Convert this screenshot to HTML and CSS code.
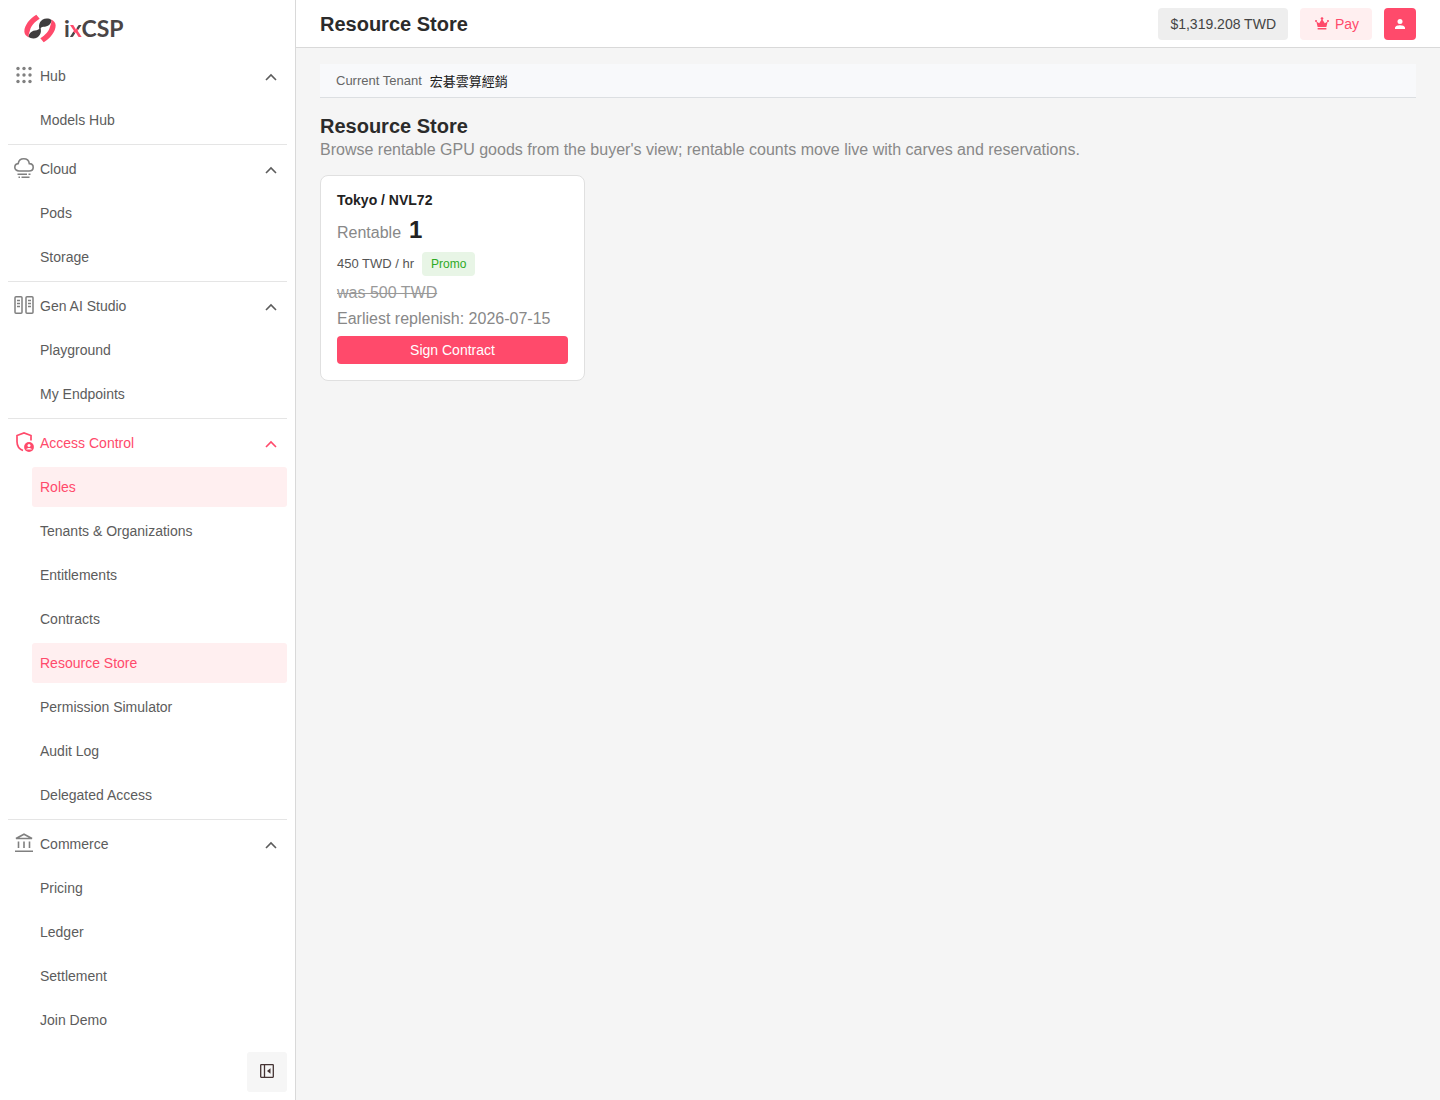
FILE: index.html
```html
<!DOCTYPE html>
<html lang="en">

<head>
    <meta charset="UTF-8"/>
    <meta name="viewport" content="width=device-width, initial-scale=1.0"/>
    <title>Resource Store</title>
    <link rel="stylesheet" href="styles.css">
</head>

<body>
<!-- shared chevron -->
<svg class="sprite" aria-hidden="true">
    <symbol id="chevron" viewBox="0 0 16 16">
        <path d="M3 11L8 6l5 5" fill="none" stroke="currentColor" stroke-width="1.6"/>
    </symbol>
</svg>
<div class="layout">
    <aside class="sidebar">
        <a class="logo" href="#">
            <svg class="logo-mark" viewBox="48 28 96 86" aria-hidden="true">
                <g id="blade">
                    <path fill="#ff4a6b" d="M85 30L95 42C80 51 69 63 66 76C64 84 60 90 63 98C54 94 49 88 49 80C49 62 66 40 85 30Z"/>
                    <path fill="#3f3d3e" d="M62 96C62 84 72 77 86 76C91 75 94 73 97 68C103 84 94 100 76 101C70 101 65 100 62 96Z"/>
                </g>
                <use href="#blade" transform="rotate(180 96 71)"/>
            </svg>
            <span class="logo-text">i<span class="logo-x">x</span>CSP</span>
        </a>
        <nav class="menu">
            <div class="group">
                <button class="group-title" type="button">
                    <svg class="group-icon" viewBox="0 0 20 20" fill="currentColor" aria-hidden="true">
                        <circle cx="4" cy="3.500" r="1.7"/><circle cx="10" cy="3.500" r="1.7"/><circle cx="16" cy="3.500" r="1.7"/>
                        <circle cx="4" cy="10" r="1.7"/><circle cx="10" cy="10" r="1.7"/><circle cx="16" cy="10" r="1.7"/>
                        <circle cx="4" cy="16.500" r="1.7"/><circle cx="10" cy="16.500" r="1.7"/><circle cx="16" cy="16.500" r="1.7"/>
                    </svg>
                    <span>Hub</span>
                    <svg class="chevron"><use href="#chevron"/></svg>
                </button>
                <a class="item" href="#">Models Hub</a>
            </div>
            <div class="group">
                <button class="group-title" type="button">
                    <svg class="group-icon" viewBox="0 0 20 20" fill="none" stroke="currentColor" stroke-width="1.6" aria-hidden="true">
                        <path d="M5 13C2.500 13 .8 11.500 .8 9.300C.8 7.200 2.300 5.800 4.200 5.600C4.700 2.700 6.900 .8 9.700 .8C12.700 .8 14.900 2.800 15.300 5.600C17.600 5.600 19.200 7.200 19.200 9.300C19.200 11.500 17.500 13 15 13Z"/>
                        <path d="M3.500 16.200H13M14.500 16.200H16.500M4.500 19.200H6M7.500 19.200H15.500"/>
                    </svg>
                    <span>Cloud</span>
                    <svg class="chevron"><use href="#chevron"/></svg>
                </button>
                <a class="item" href="#">Pods</a>
                <a class="item" href="#">Storage</a>
            </div>
            <div class="group">
                <button class="group-title" type="button">
                    <svg class="group-icon" viewBox="0 0 20 20" fill="none" stroke="currentColor" stroke-width="1.5" aria-hidden="true">
                        <rect x="1" y="1.700" width="7" height="16.600" rx="1"/>
                        <rect x="12" y="1.700" width="7" height="16.600" rx="1"/>
                        <path d="M3 5.500h3M3 8.500h3M3 11.500h3M14 5.500h3M14 8.500h3M14 11.500h3"/>
                    </svg>
                    <span>Gen AI Studio</span>
                    <svg class="chevron"><use href="#chevron"/></svg>
                </button>
                <a class="item" href="#">Playground</a>
                <a class="item" href="#">My Endpoints</a>
            </div>
            <div class="group">
                <button class="group-title active" type="button">
                    <svg class="group-icon" viewBox="0 0 20 20" fill="none" stroke="currentColor" stroke-width="1.7" aria-hidden="true">
                        <path d="M9 18.500C5 17 3 13.500 3 9.500V3.500L10 1L17 3.500V8.500"/>
                        <circle cx="15" cy="15" r="4.900" fill="currentColor" stroke="none"/>
                        <circle cx="15" cy="13.400" r="1.500" fill="#fff" stroke="none"/>
                        <path d="M12.200 17.400C12.800 15.400 17.200 15.400 17.800 17.400Z" fill="#fff" stroke="none"/>
                    </svg>
                    <span>Access Control</span>
                    <svg class="chevron"><use href="#chevron"/></svg>
                </button>
                <a class="item active" href="#">Roles</a>
                <a class="item" href="#">Tenants &amp; Organizations</a>
                <a class="item" href="#">Entitlements</a>
                <a class="item" href="#">Contracts</a>
                <a class="item active" href="#">Resource Store</a>
                <a class="item" href="#">Permission Simulator</a>
                <a class="item" href="#">Audit Log</a>
                <a class="item" href="#">Delegated Access</a>
            </div>
            <div class="group">
                <button class="group-title" type="button">
                    <svg class="group-icon" viewBox="0 0 20 20" fill="none" stroke="currentColor" stroke-width="1.600" aria-hidden="true">
                        <path d="M2 5.500L10 1.200L18 5.500ZM4.500 8.500V15M10 8.500V15M15.500 8.500V15M1 18.200H19"/>
                    </svg>
                    <span>Commerce</span>
                    <svg class="chevron"><use href="#chevron"/></svg>
                </button>
                <a class="item" href="#">Pricing</a>
                <a class="item" href="#">Ledger</a>
                <a class="item" href="#">Settlement</a>
                <a class="item" href="#">Join Demo</a>
            </div>
        </nav>
        <button class="collapse" type="button" aria-label="Collapse menu">
            <svg width="16" height="16" viewBox="0 0 16 16" fill="none" stroke="currentColor" stroke-width="1.300" aria-hidden="true">
                <rect x="1.700" y="1.700" width="12.600" height="12.600" rx=".5"/>
                <path d="M5.500 1.700V14.300"/>
                <path d="M11.500 5.200V10.800L8 8Z" fill="currentColor" stroke="none"/>
            </svg>
        </button>
    </aside>
    <div class="page">
        <header class="topbar">
            <h1>Resource Store</h1>
            <div class="topbar-actions">
                <button class="btn balance" type="button">$1,319.208 TWD</button>
                <button class="btn pay" type="button">
                    <svg width="14" height="14" viewBox="0 0 16 16" fill="currentColor" aria-hidden="true">
                        <path d="M3 11.500L1.500 5L4.800 7L7.400 3H8.600L11.200 7L14.500 5L13 11.500ZM3 12.700H13V14.200H3Z"/>
                        <circle cx="8" cy="1.800" r="1.500"/><circle cx="1.200" cy="4.600" r="1.200"/><circle cx="14.800" cy="4.600" r="1.200"/>
                    </svg>
                    Pay
                </button>
                <button class="btn user" type="button" aria-label="Account">
                    <svg width="16" height="16" viewBox="0 0 16 16" fill="currentColor" aria-hidden="true">
                        <circle cx="8" cy="5.500" r="2.500"/>
                        <path d="M3 13V11.700C3 10 6 9.200 8 9.200S13 10 13 11.700V13Z"/>
                    </svg>
                </button>
            </div>
        </header>
        <main class="content">
            <div class="tenant">
                <span>Current Tenant</span>
                <strong>宏碁雲算經銷</strong>
            </div>
            <h2>Resource Store</h2>
            <p class="intro">Browse rentable GPU goods from the buyer's view; rentable counts move live with carves and reservations.</p>
            <div class="goods">
                <section class="card">
                    <h3>Tokyo / NVL72</h3>
                    <div class="rentable">Rentable <strong>1</strong></div>
                    <div class="price">450 TWD / hr <span class="tag">Promo</span></div>
                    <del>was 500 TWD</del>
                    <p>Earliest replenish: 2026-07-15</p>
                    <button class="sign" type="button">Sign Contract</button>
                </section>
            </div>
        </main>
    </div>
</div>
</body>
</html>
```

FILE: styles.css
```css
* {
    box-sizing: border-box;
}

body {
    margin: 0;
    font-family: "Liberation Sans", "Noto Sans CJK TC", sans-serif;
    font-size: 14px;
    color: #222;
    background: #f5f5f5;
}

h1, h2, h3, p {
    margin: 0;
}

a {
    color: inherit;
    text-decoration: none;
}

button {
    border: none;
    padding: 0;
    font: inherit;
    color: inherit;
    background: none;
    cursor: pointer;
}

.sprite {
    display: none;
}

.layout {
    display: flex;
    min-height: 100vh;
}

/* sidebar */
.sidebar {
    flex: 0 0 296px;
    display: flex;
    flex-direction: column;
    padding: 0 8px 8px;
    background: #fff;
    border-right: 1px solid #d9d9d9;
    color: #5c5c5c;
}

.logo {
    display: flex;
    align-items: center;
    gap: 8px;
    height: 56px;
    padding-left: 16px;
}

.logo-mark {
    width: 32px;
    height: 29px;
}

.logo-text {
    font-family: Lato, sans-serif;
    font-size: 23px;
    font-weight: 700;
    line-height: 24px;
    color: #4a4546;
}

.logo-x {
    color: transparent;
    background: linear-gradient(50deg, #4a4546 34%, #ff4a6b 34%, #ff4a6b 51%, #4a4546 51%);
    background-clip: text;
    -webkit-background-clip: text;
}

.menu {
    flex: 1;
}

.group {
    display: flex;
    flex-direction: column;
    gap: 4px;
    padding-bottom: 4px;
}

.group + .group {
    padding-top: 4px;
    border-top: 1px solid #e5e5e5;
}

.group-title {
    display: flex;
    align-items: center;
    gap: 6px;
    height: 40px;
    padding: 0 8px 0 6px;
    text-align: left;
}

.group-title span {
    flex: 1;
}

.group-icon {
    width: 20px;
    height: 20px;
    margin-bottom: 2px;
    color: #808080;
}

.chevron {
    width: 16px;
    height: 16px;
    margin-top: 2px;
}

.item {
    height: 40px;
    margin-left: 24px;
    padding: 0 8px;
    border-radius: 3px;
    line-height: 40px;
}

.group-title.active,
.group-title.active .group-icon,
.item.active {
    color: #ff4a6b;
}

.item.active {
    background: #ffeff0;
}

.collapse {
    display: flex;
    align-items: center;
    justify-content: center;
    align-self: flex-end;
    width: 40px;
    height: 40px;
    padding-bottom: 2px;
    border-radius: 3px;
    background: #f6f6f6;
    color: #433;
}

/* top bar */
.page {
    flex: 1;
    min-width: 0;
}

.topbar {
    display: flex;
    align-items: center;
    justify-content: space-between;
    height: 48px;
    padding: 0 24px;
    background: #fff;
    border-bottom: 1px solid #d9d9d9;
}

h1, h2 {
    font-size: 20px;
    line-height: 24px;
    color: #2b2b2b;
}

.topbar-actions {
    display: flex;
    gap: 12px;
}

.btn {
    display: flex;
    align-items: center;
    justify-content: center;
    gap: 6px;
    height: 32px;
    padding: 0 12px;
    border-radius: 4px;
}

.balance {
    background: #eee;
    color: #444;
}

.pay {
    min-width: 72px;
    padding-left: 14px;
    background: #ffeff0;
    color: #ff4a6b;
}

.user {
    width: 32px;
    padding: 0;
    background: #ff4a6b;
    color: #fff;
}

/* content */
.content {
    padding: 16px 24px;
}

.tenant {
    display: flex;
    align-items: center;
    gap: 8px;
    height: 34px;
    margin-bottom: 16px;
    padding: 0 16px;
    background: #f8f9fb;
    border-bottom: 1px solid #dcdfe2;
    font-size: 13px;
    color: #666;
}

.tenant strong {
    font-weight: 400;
    color: #222;
}

.intro {
    font-size: 16px;
    line-height: 24px;
    color: #888;
}

.goods {
    display: grid;
    grid-template-columns: repeat(auto-fill, minmax(260px, 1fr));
    gap: 12px;
    margin-top: 13px;
}

.card {
    display: flex;
    flex-direction: column;
    gap: 8px;
    padding: 16px;
    background: #fff;
    border: 1px solid #e0e0e0;
    border-radius: 8px;
    font-size: 16px;
    line-height: 18px;
    color: #888;
}

.card h3 {
    font-size: 14px;
    line-height: 16px;
    color: #222;
}

.rentable {
    display: flex;
    align-items: baseline;
    gap: 8px;
    height: 28px;
}

.rentable strong {
    font-size: 24px;
    line-height: 28px;
    color: #222;
}

.price {
    display: flex;
    align-items: center;
    gap: 8px;
    font-size: 13px;
    color: #555;
}

.tag {
    padding: 0 9px;
    border-radius: 4px;
    background: #e8f5e6;
    font-size: 12px;
    line-height: 24px;
    color: #2eaa25;
}

.card del {
    color: #999;
}

.sign {
    height: 28px;
    border-radius: 4px;
    background: #ff4a6b;
    font-size: 14px;
    color: #fff;
}
```
